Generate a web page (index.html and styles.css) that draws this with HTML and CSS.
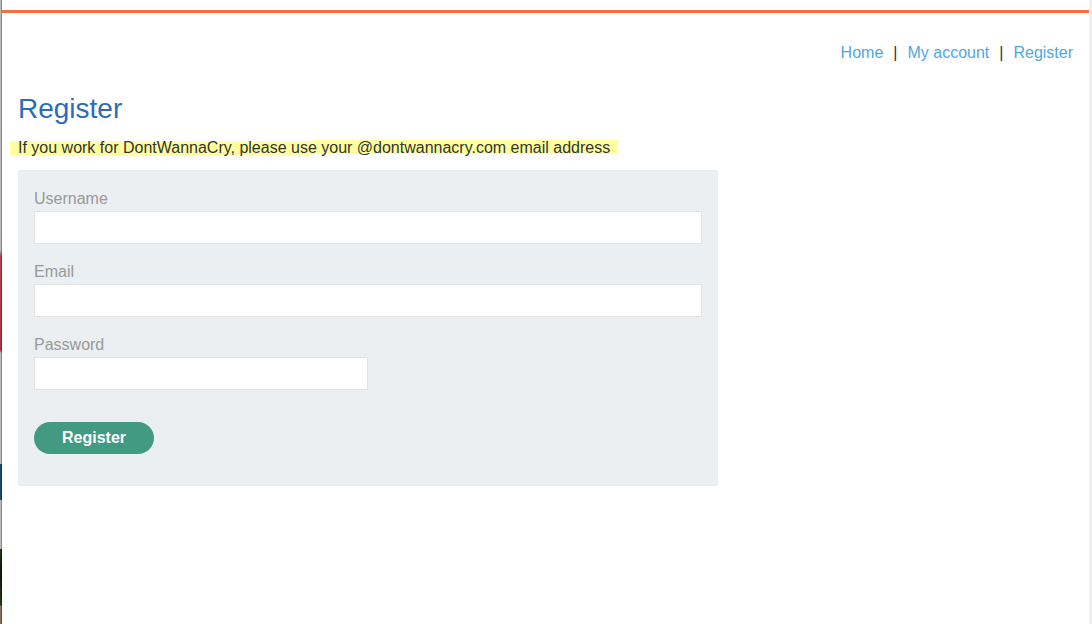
FILE: index.html
```html
<!DOCTYPE html>
<html lang="en">
<head>
<meta charset="utf-8">
<title>Register</title>
<link rel="stylesheet" href="styles.css">
</head>
<body>
<div class="window">
  <div class="edge" aria-hidden="true"></div>
  <div class="page">
    <header class="header">
      <nav class="nav">
        <a href="#">Home</a><span>|</span><a href="#">My account</a><span>|</span><a href="#">Register</a>
      </nav>
    </header>
    <main class="content">
      <h1 class="title">Register</h1>
      <p class="notice"><mark class="highlight">If you work for DontWannaCry, please use your @dontwannacry.com email address</mark></p>
      <form class="form">
        <label class="label" for="username">Username</label>
        <input class="input" id="username" type="text">
        <label class="label" for="email">Email</label>
        <input class="input" id="email" type="email">
        <label class="label" for="password">Password</label>
        <input class="input input-half" id="password" type="password">
        <button class="button" type="submit">Register</button>
      </form>
    </main>
  </div>
  <div class="gutter" aria-hidden="true"></div>
</div>
</body>
</html>
```

FILE: styles.css
```css
* {
  box-sizing: border-box;
}

body {
  margin: 0;
  background: #fff;
  color: #333332;
  font: 16px/24px "Liberation Sans", Arial, sans-serif;
}

.window {
  display: flex;
  min-height: 100vh;
}

.edge {
  width: 2px;
  border-right: 1px solid rgba(0, 0, 0, 0.25);
  background: linear-gradient(
    #b9b9b9 0 250px,
    #a3484e 256px,
    #b83a41 300px,
    #a33a42 350px,
    #b9b9b9 353px 464px,
    #1a4a72 464px 500px,
    #b9b9b9 500px 549px,
    #1c3a18 549px,
    #10160f 572px,
    #1f3d1a 605px,
    #8a6a58 606px
  );
}

.page {
  flex: 1;
  padding-top: 10px;
}

.header {
  display: flex;
  justify-content: flex-end;
  padding: 28px 16px 0;
  border-top: 3px solid #f4713f;
}

.nav {
  display: flex;
  gap: 10px;
}

.nav a {
  color: #4fa8e0;
  text-decoration: none;
}

.content {
  padding: 28px 16px 0;
}

.title {
  margin: 0;
  color: #2d6cb8;
  font-size: 28px;
  font-weight: 400;
  line-height: 32px;
}

.notice {
  margin: 11px 0 10px;
}

/* Marker stroke that rises slightly towards the right */
.highlight {
  margin-left: -8px;
  padding: 0 8px;
  background:
    linear-gradient(#ffffa0, #ffffa0) 0 2px / 50% 14px no-repeat,
    linear-gradient(#ffffa0, #ffffa0) 100% 1px / 50% 14px no-repeat;
  color: inherit;
}

.form {
  display: flex;
  flex-direction: column;
  align-items: flex-start;
  max-width: 700px;
  padding: 17px 16px 32px;
  background: #ebeff2;
}

.label {
  color: #999;
}

.input {
  width: 100%;
  height: 33px;
  margin: 0 0 16px;
  padding: 0 8px;
  border: 1px solid #e4e4e4;
  background: #fff;
  font: inherit;
}

.input-half {
  width: 50%;
}

.button {
  height: 32px;
  margin-top: 16px;
  padding: 0 28px;
  border: 0;
  border-radius: 16px;
  background: #419a81;
  color: #fff;
  font: inherit;
  font-weight: 700;
}

.gutter {
  width: 3px;
  background: #f0f0f0;
}
```
